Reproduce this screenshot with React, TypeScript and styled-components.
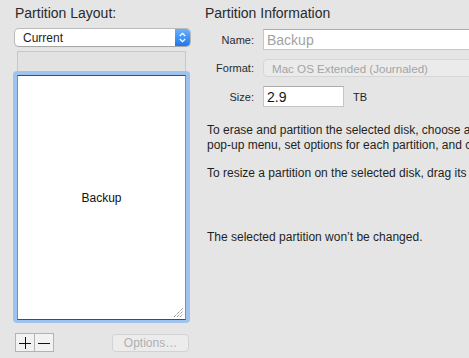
import styled, { createGlobalStyle } from 'styled-components';

const GlobalStyle = createGlobalStyle`
  html, body {
    margin: 0;
    padding: 0;
    background: #e5e5e5;
  }
  body {
    font-family: "Liberation Sans", Arial, sans-serif;
  }
`;

const Window = styled.div`
  width: 469px;
  height: 358px;
  overflow: hidden;
  display: flex;
  background: #e5e5e5;
  color: #262626;
`;

/* left column: partition layout */

const LeftPane = styled.div`
  width: 190px;
  flex: none;
  box-sizing: border-box;
  padding: 5px 0 0 13px;
  display: flex;
  flex-direction: column;
`;

const Heading = styled.div<{ $indent?: number }>`
  font-size: 14px;
  line-height: 17px;
  margin-left: ${p => p.$indent ?? 0}px;
  color: #2a2a2a;
  white-space: nowrap;
`;

const Popup = styled.div`
  margin: 7px 0 0 2px;
  width: 175px;
  height: 17px;
  box-sizing: border-box;
  display: flex;
  align-items: center;
  background: #fff;
  border-radius: 4px;
  box-shadow: 0 0 0 1px rgba(0, 0, 0, 0.18), 0 1px 1px rgba(0, 0, 0, 0.12);
  overflow: hidden;
  font-size: 12px;
  color: #1e1e1e;
`;

const PopupText = styled.span`
  padding-left: 8px;
`;

const Stepper = styled.div`
  margin-left: auto;
  width: 15px;
  height: 100%;
  background: linear-gradient(#69b1fb, #1c77f0);
  display: flex;
  align-items: center;
  justify-content: center;
`;

const MapBar = styled.div`
  margin: 5px 0 0 4px;
  width: 169px;
  height: 20px;
  box-sizing: border-box;
  background: #e2e2e2;
  border: 1px solid #c8c8c8;
  border-bottom: none;
`;

const FocusRing = styled.div`
  width: 177px;
  height: 252px;
  box-sizing: border-box;
  padding: 4px 4px 3px 4px;
  background: #9dc3ee;
  border-radius: 4px;
  display: flex;
`;

const PartitionBox = styled.div`
  position: relative;
  flex: 1;
  background: #fff;
  border-top: 1px solid #4a4a4a;
  border-bottom: 1px solid #4a4a4a;
  border-left: 1px solid #8c8c8c;
  border-right: 1px solid #8c8c8c;
  display: flex;
  align-items: center;
  justify-content: center;
  font-size: 12px;
  color: #111;
`;

const Grip = styled.svg`
  position: absolute;
  right: 1px;
  bottom: 1px;
`;

const BottomRow = styled.div`
  margin: 10px 0 0 2px;
  width: 174px;
  display: flex;
  align-items: flex-start;
  justify-content: space-between;
`;

const Segmented = styled.div`
  display: flex;
  height: 19px;
  box-sizing: border-box;
  border: 1px solid #b3b3b3;
  background: #f2f2f2;
`;

const Segment = styled.div<{ $divider?: boolean }>`
  width: 18px;
  display: flex;
  align-items: center;
  justify-content: center;
  border-left: ${p => (p.$divider ? '1px solid #b3b3b3' : 'none')};
`;

const PushButton = styled.div`
  margin-top: 1px;
  width: 77px;
  height: 18px;
  box-sizing: border-box;
  border: 1px solid #d2d2d2;
  border-radius: 4px;
  background: #ececec;
  color: #b0b0b0;
  font-size: 12px;
  display: flex;
  align-items: center;
  justify-content: center;
`;

/* right column: partition information */

const RightPane = styled.div`
  flex: 1;
  min-width: 0;
  box-sizing: border-box;
  padding: 5px 0 0 15px;
  display: flex;
  flex-direction: column;
  overflow: hidden;
`;

const Form = styled.div`
  margin-top: 7px;
  display: grid;
  grid-template-columns: 49px 1fr;
  column-gap: 9px;
  row-gap: 9px;
  align-items: center;
`;

const Label = styled.div`
  font-size: 11px;
  text-align: right;
  color: #2a2a2a;
  white-space: nowrap;
`;

const TextField = styled.div<{ $width: number; $muted?: boolean }>`
  width: ${p => p.$width}px;
  height: 21px;
  box-sizing: border-box;
  border: 1px solid #c6c6c6;
  border-top-color: #ababab;
  background: #fff;
  padding-left: 3px;
  display: flex;
  align-items: center;
  font-size: 14px;
  color: ${p => (p.$muted ? '#a2a2a2' : '#161616')};
  white-space: nowrap;
`;

const FormatPopup = styled.div`
  width: 260px;
  height: 18px;
  box-sizing: border-box;
  border: 1px solid #d6d6d6;
  border-radius: 4px;
  background: #ebebeb;
  padding-left: 8px;
  display: flex;
  align-items: center;
  font-size: 11.6px;
  color: #a4a4a4;
  white-space: nowrap;
`;

const SizeRow = styled.div`
  display: flex;
  align-items: center;
  gap: 9px;
`;

const Unit = styled.span`
  font-size: 11px;
  color: #1e1e1e;
`;

const Note = styled.div<{ $gap: number }>`
  margin: ${p => p.$gap}px 0 0 2px;
  font-size: 12px;
  line-height: 15px;
  color: #1f1f1f;
  white-space: nowrap;
`;

function StepperIcon() {
  return (
    <svg width="7" height="11" viewBox="0 0 7 11">
      <path d="M0.8 4 L3.5 1.3 L6.2 4" fill="none" stroke="#fff" strokeWidth="1.3" />
      <path d="M0.8 7 L3.5 9.7 L6.2 7" fill="none" stroke="#fff" strokeWidth="1.3" />
    </svg>
  );
}

export default function App() {
  return (
    <>
      <GlobalStyle />
      <Window>
        <LeftPane>
          <Heading $indent={2}>Partition Layout:</Heading>
          <Popup>
            <PopupText>Current</PopupText>
            <Stepper>
              <StepperIcon />
            </Stepper>
          </Popup>
          <MapBar />
          <FocusRing>
            <PartitionBox>
              Backup
              <Grip width="11" height="11" viewBox="0 0 11 11">
                <path d="M1 10 L10 1 M4 10 L10 4 M7 10 L10 7" stroke="#666" strokeWidth="1" strokeDasharray="1 1" />
              </Grip>
            </PartitionBox>
          </FocusRing>
          <BottomRow>
            <Segmented>
              <Segment>
                <svg width="12" height="12" viewBox="0 0 12 12">
                  <path d="M0 6.5 H12 M6.5 0 V12" stroke="#111" strokeWidth="1" />
                </svg>
              </Segment>
              <Segment $divider>
                <svg width="12" height="12" viewBox="0 0 12 12">
                  <path d="M0 6.5 H12" stroke="#111" strokeWidth="1" />
                </svg>
              </Segment>
            </Segmented>
            <PushButton>Options…</PushButton>
          </BottomRow>
        </LeftPane>

        <RightPane>
          <Heading>Partition Information</Heading>
          <Form>
            <Label>Name:</Label>
            <TextField $width={260} $muted>Backup</TextField>
            <Label>Format:</Label>
            <FormatPopup>Mac OS Extended (Journaled)</FormatPopup>
            <Label>Size:</Label>
            <SizeRow>
              <TextField $width={81}>2.9</TextField>
              <Unit>TB</Unit>
            </SizeRow>
          </Form>
          <Note $gap={16}>
            To erase and partition the selected disk, choose a partition layout from the Partition Layout
            <br />
            pop-up menu, set options for each partition, and click Apply.
          </Note>
          <Note $gap={13}>To resize a partition on the selected disk, drag its resize control and click Apply.</Note>
          <Note $gap={49}>The selected partition won’t be changed.</Note>
        </RightPane>
      </Window>
    </>
  );
}
